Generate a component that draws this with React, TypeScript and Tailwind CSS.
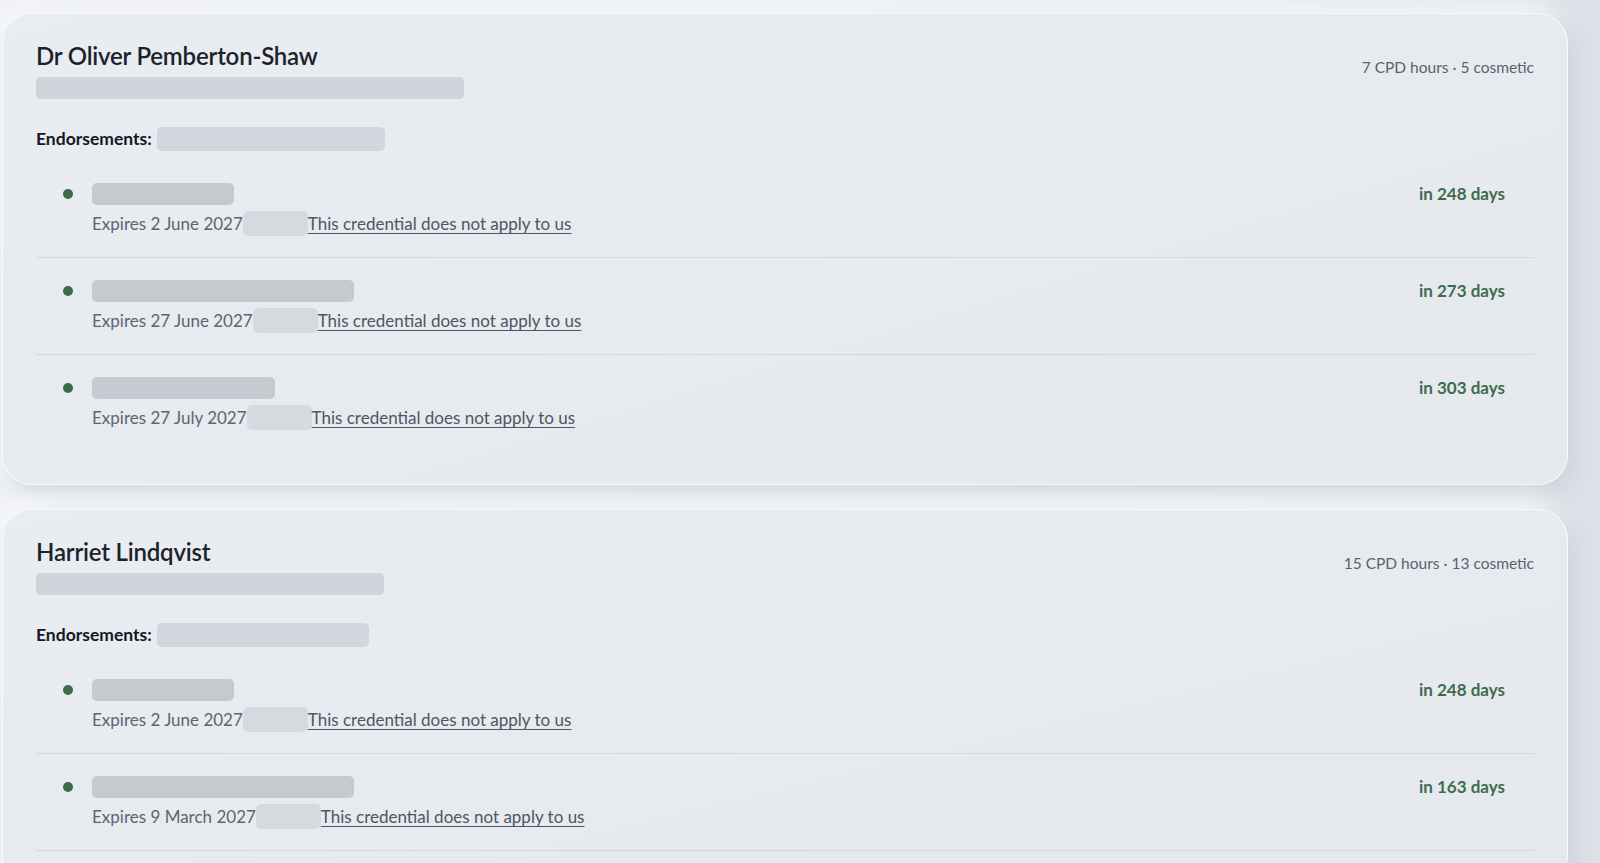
import React from "react";

type Cred = { bar: number; expires: string; days: string };

type Person = {
  name: string;
  nameBar: number;
  endBar: number;
  cpd: string;
  creds: Cred[];
  more?: boolean;
};

const people: Person[] = [
  {
    name: "Dr Oliver Pemberton-Shaw",
    nameBar: 428,
    endBar: 228,
    cpd: "7 CPD hours · 5 cosmetic",
    creds: [
      { bar: 142, expires: "Expires 2 June 2027", days: "in 248 days" },
      { bar: 262, expires: "Expires 27 June 2027", days: "in 273 days" },
      { bar: 183, expires: "Expires 27 July 2027", days: "in 303 days" },
    ],
  },
  {
    name: "Harriet Lindqvist",
    nameBar: 348,
    endBar: 212,
    cpd: "15 CPD hours · 13 cosmetic",
    creds: [
      { bar: 142, expires: "Expires 2 June 2027", days: "in 248 days" },
      { bar: 262, expires: "Expires 9 March 2027", days: "in 163 days" },
    ],
    more: true,
  },
];

function CredentialRow({ c }: { c: Cred }) {
  return (
    <li className="flex items-start pl-[27px] pr-[29px] pt-[22px] pb-[21px]">
      <span className="mt-[6px] h-[10px] w-[10px] shrink-0 rounded-full bg-[#3b6a4f]" />
      <div className="ml-[19px] flex flex-1 flex-col">
        <div className="h-[22px] rounded-[5px] bg-[#c6cad0]" style={{ width: c.bar }} />
        <div className="mt-[6px] flex h-[25px] items-center text-[17px] text-[#5d6570]">
          <span>{c.expires}</span>
          <span className="h-[25px] w-[65px] rounded-[5px] bg-[#d6dae0]" />
          <a href="#" className="text-[#4e5663] underline underline-offset-[3px] decoration-[1px]">
            This credential does not apply to us
          </a>
        </div>
      </div>
      <span className="text-[17px] font-bold leading-[22px] text-[#3f6b50]">{c.days}</span>
    </li>
  );
}

function PersonCard({ p }: { p: Person }) {
  return (
    <section className="ml-[2px] w-[1566px] rounded-[30px] border border-white/70 bg-gradient-to-br from-[#e9ecf0] to-[#e5e9ee] px-[33px] pt-[26px] pb-[33px] shadow-[10px_10px_22px_#cfd5dd,-10px_-10px_22px_#f8f9fb]">
      <div className="flex items-start justify-between">
        <div>
          <h2 className="text-[24px] font-semibold leading-[32px] tracking-[-0.2px] text-[#1b222c]">{p.name}</h2>
          <div className="mt-[5px] h-[22px] rounded-[5px] bg-[#d0d5db]" style={{ width: p.nameBar }} />
        </div>
        <p className="mt-[15px] text-[15.5px] leading-[24px] text-[#5a626d]">{p.cpd}</p>
      </div>

      <div className="mt-[28px] flex h-[24px] items-center">
        <span className="text-[17.5px] font-bold text-[#15191f]">Endorsements:</span>
        <span className="ml-[5px] h-[24px] rounded-[5px] bg-[#d2d7dd]" style={{ width: p.endBar }} />
      </div>

      <ul className={`mt-[10px] divide-y divide-[#d3d8de] ${p.more ? "border-b border-[#d3d8de]" : ""}`}>
        {p.creds.map((c, i) => (
          <CredentialRow key={i} c={c} />
        ))}
      </ul>
    </section>
  );
}

export default function App() {
  return (
    <div
      className="h-screen overflow-hidden bg-gradient-to-r from-[#eceff3] via-[#e9ecf0] to-[#dde2e8]"
      style={{ fontFamily: "Lato, 'Noto Sans', sans-serif" }}
    >
      <div className="flex flex-col gap-[24px] pt-[13px]">
        {people.map((p) => (
          <PersonCard key={p.name} p={p} />
        ))}
      </div>
    </div>
  );
}
